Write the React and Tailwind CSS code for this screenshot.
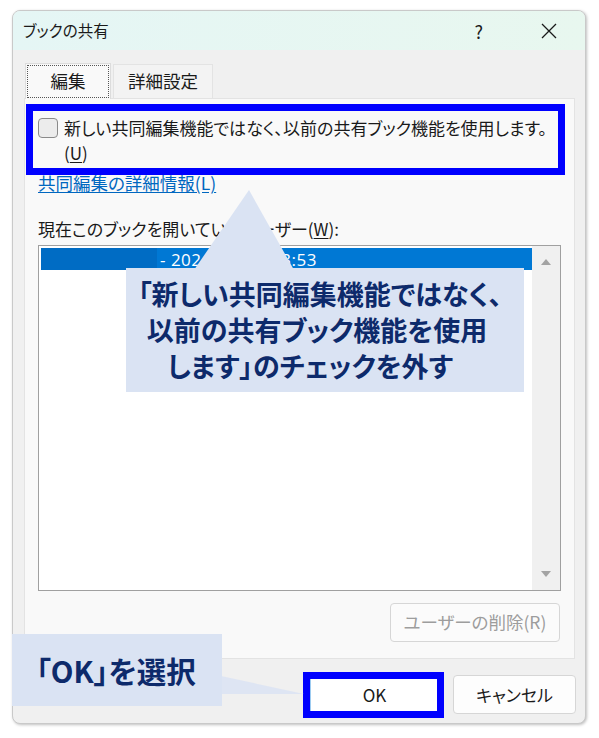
import React from 'react';

const jp = "[font-family:'Noto_Sans_CJK_JP',sans-serif] [font-feature-settings:'palt']";

const App = () => {
    return (
        <div className={`relative w-[599px] h-[738px] bg-white overflow-hidden text-[#1a1a1a] ${jp}`}>
            {/* dialog */}
            <div className='ml-[12px] mt-[10px] w-[574px] h-[714px] flex flex-col rounded-lg border border-[#c9c9c9] bg-[#f0f0f0] overflow-hidden shadow-[1px_1px_3px_rgba(0,0,0,0.25)]'>
                <div className='h-[39px] shrink-0 flex items-center pl-[10px] pr-[20px] bg-gradient-to-r from-[#e5f6f5] to-[#e8f7ef]'>
                    <span className='text-[15.5px] leading-none'>ブックの共有</span>
                    <span className='ml-auto text-[18px] leading-none mr-[58px]'>?</span>
                    <svg width="16" height="16" viewBox="0 0 16 16" className='mr-[8px]'>
                        <path d="M1 1 L15 15 M15 1 L1 15" stroke="#1a1a1a" strokeWidth="1.3" fill="none" />
                    </svg>
                </div>
                <div className='flex-1 flex flex-col pl-[11px] pr-[10px] pt-[12px]'>
                    <div className='flex items-end h-[36px]'>
                        <div className='relative z-10 -mb-px ml-[1px] w-[86px] h-[36px] bg-[#f9f9f9] border border-b-0 border-[#dcdcdc] p-[1px]'>
                            <div className='w-full h-full border border-dotted border-[#555] flex items-center justify-center text-[17.5px]'>編集</div>
                        </div>
                        <div className='ml-[2px] w-[100px] h-[34px] bg-[#f3f3f3] border border-b-0 border-[#e3e3e3] flex items-center justify-center text-[17.5px]'>詳細設定</div>
                    </div>
                    <div className='h-[561px] border border-[#e3e3e3] bg-[#f9f9f9] flex flex-col pl-[13px] pr-[12px] pt-[16px] text-[17px]'>
                        <div className='flex items-start'>
                            <div className='mt-[3px] w-[20px] h-[20px] shrink-0 rounded-[4px] border border-[#8a8a8a] bg-[#ececec]'></div>
                            <div className='ml-[6px] leading-[25px] whitespace-nowrap'>
                                新しい共同編集機能ではなく、以前の共有ブック機能を使用します。<br />
                                (<span className='underline underline-offset-2'>U</span>)
                            </div>
                        </div>
                        <a className='mt-[5px] self-start text-[17.5px] leading-[25px] text-[#0067c0] underline underline-offset-2 cursor-pointer'>共同編集の詳細情報(L)</a>
                        <div className='mt-[21px] leading-[25px]'>
                            現在このブックを開いているユーザー(<span className='underline underline-offset-2'>W</span>):
                        </div>
                        <div className='mt-[4px] w-[523px] h-[346px] border border-[#a0a0a0] bg-white flex'>
                            <div className='flex-1 p-[2px] pr-0'>
                                <div className="h-[22px] flex items-center bg-[#0078d4] text-white text-[17px] [font-family:'Open_Sans',sans-serif]">
                                    <div className='w-[116px] h-full bg-[#006cc4]'></div>
                                    <span className='ml-[3px] leading-none tracking-[0.5px]'>- 2024/05/20 13:53</span>
                                </div>
                            </div>
                            <div className='w-[28px] bg-[#f0f0f0] flex flex-col items-center justify-between py-[13px]'>
                                <svg width="10" height="6" viewBox="0 0 10 6"><path d="M0 6 L5 0 L10 6 Z" fill="#a3a3a3" /></svg>
                                <svg width="10" height="6" viewBox="0 0 10 6"><path d="M0 0 L5 6 L10 0 Z" fill="#a3a3a3" /></svg>
                            </div>
                        </div>
                        <div className='mt-[12px] flex justify-end'>
                            <div className='mr-[2px] w-[170px] h-[39px] rounded-[4px] border border-[#d6d6d6] bg-[#fbfbfb] flex items-center justify-center text-[17.5px] text-[#9d9d9d]'>ユーザーの削除(R)</div>
                        </div>
                    </div>
                    <div className='mt-[16px] flex justify-end gap-[11px] -mr-[1px] text-[17px]'>
                        <div className='w-[135px] h-[39px] rounded-[4px] bg-white px-[3px] flex'>
                            <div className='flex-1 border-x border-[#9ccbf0] flex items-center justify-center'>OK</div>
                        </div>
                        <div className='w-[123px] h-[39px] rounded-[4px] border border-[#d6d6d6] bg-[#fdfdfd] flex items-center justify-center'>キャンセル</div>
                    </div>
                </div>
            </div>

            {/* annotation: highlight boxes */}
            <div className='absolute left-[26px] top-[104px] w-[539px] h-[71px] border-[7px] border-[#0000ff]'></div>
            <div className='absolute left-[303px] top-[672px] w-[141px] h-[46px] border-[7px] border-[#0000ff]'></div>

            {/* callout pointers */}
            <svg className='absolute left-0 top-0' width="599" height="738" viewBox="0 0 599 738">
                <polygon points="249,190 194,270 294,270" fill="#dae3f3" />
                <polygon points="221,676 304,694 221,694" fill="#dae3f3" fillOpacity="0.85" />
            </svg>

            {/* callout 1 */}
            <div className='absolute left-[126px] top-[268px] w-[398px] h-[124px] bg-[#dae3f3] flex flex-col items-center justify-center pr-[10px] text-[#0d2a6b] font-bold text-[27px] leading-[36px]'>
                <span>「新しい共同編集機能ではなく、</span>
                <span className='pr-[6px]'>以前の共有ブック機能を使用</span>
                <span className='pr-[20px]'>します」のチェックを外す</span>
            </div>

            {/* callout 2 */}
            <div className='absolute left-[12px] top-[634px] w-[210px] h-[72px] bg-[#dae3f3] flex items-center pl-[24px] text-[#0d2a6b] font-bold text-[29.5px]'>
                「OK」を選択
            </div>
        </div>
    );
};

export default App;
